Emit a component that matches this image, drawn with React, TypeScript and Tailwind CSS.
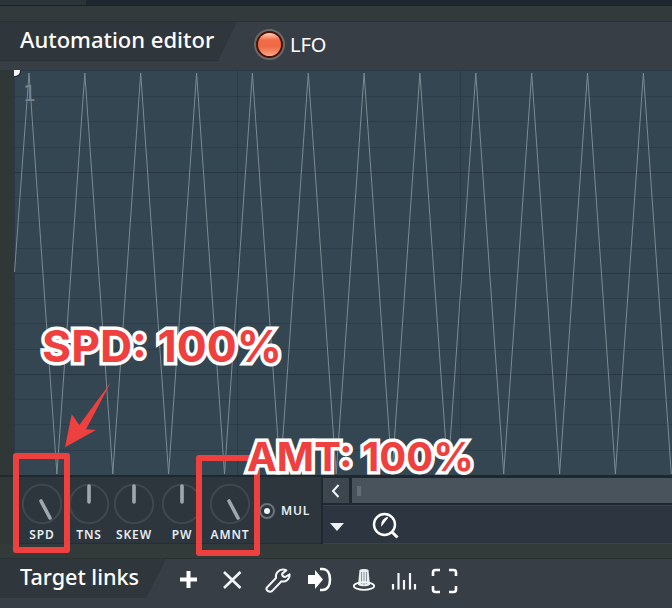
import React from "react";

const sans = "font-['Noto_Sans','Open_Sans',sans-serif]";

const wavePoints = (() => {
  const period = 55.85;
  const pts: string[] = ["0.5,202"];
  for (let i = 0; i < 12; i++) {
    const peak = 15 + i * period;
    pts.push(`${peak.toFixed(1)},3`);
    pts.push(`${(peak + period / 2).toFixed(1)},404`);
  }
  return pts.join(" ");
})();

const hLines = Array.from({ length: 15 }, (_, i) => ({ y: 26 + i * 25.25, dark: (i + 1) % 4 === 0 }));

function Graph() {
  return (
    <svg width="658" height="405" viewBox="0 0 658 405" className="block">
      {hLines.map((l) => (
        <line key={l.y} x1="0" x2="658" y1={Math.round(l.y) + 0.5} y2={Math.round(l.y) + 0.5} stroke={l.dark ? "#263540" : "#2c3d49"} strokeWidth="1" />
      ))}
      <line x1="223.5" x2="223.5" y1="0" y2="405" stroke="#2a3a46" />
      <line x1="446.5" x2="446.5" y1="0" y2="405" stroke="#2a3a46" />
      <line x1="0.5" x2="0.5" y1="0" y2="405" stroke="#2a3a46" />
      <line x1="0" x2="658" y1="0.5" y2="0.5" stroke="#2a3a46" />
      <polyline points={wavePoints} fill="none" stroke="#7a8b94" strokeWidth="1" />
    </svg>
  );
}

function Knob({ label, w, x2, y2, x1, y1 }: { label: string; w: string; x1: number; y1: number; x2: number; y2: number }) {
  return (
    <div className={`${w} shrink-0 flex flex-col items-center`}>
      <svg width="42" height="42" viewBox="0 0 42 42" className="shrink-0 block mt-[6px]">
        <circle cx="21" cy="21" r="19.2" fill="none" stroke="#3f484f" strokeWidth="2" />
        <line x1={x1} y1={y1} x2={x2} y2={y2} stroke="#a0a8ad" strokeWidth="3.6" strokeLinecap="round" />
      </svg>
      <span className={`${sans} mt-[2px] text-[12px] leading-[16px] font-semibold tracking-[0.9px] text-[#e6edf2] whitespace-nowrap`}>{label}</span>
    </div>
  );
}

function ToolIcons() {
  return (
    <div className="flex items-center h-[44px] ml-[4px]">
      <svg width="316" height="44" viewBox="0 0 316 44" className="block" fill="none">
        {/* plus */}
        <path d="M10 20.500h17M18.500 12v17" stroke="#fff" strokeWidth="4" />
        {/* cross */}
        <path d="M54 13l16.500 16M70.500 13L54 29" stroke="#f2f6f9" strokeWidth="2.600" />
        {/* wrench */}
        <path d="M96.500 29l9.500-10c-1-4.500 2.500-8.500 7-8.500 1.300 0 2.400.3 3.400.8l-4.200 3.300c-.4 1.800.9 3.500 3 3.400l4.400-2.700c.3 4.600-3.600 8-8.100 7l-9.500 9.800c-2.600 1.600-6.300-.7-5.500-3.100z" stroke="#f2f6f9" strokeWidth="2" strokeLinejoin="round" />
        {/* arrow into bracket */}
        <path d="M138 16h7V11l8 9.500-8 9.500v-5h-7z" fill="#fff" />
        <path d="M150 10h2.500c4.800 0 7.500 4.500 7.500 10.500S157.300 31 152.500 31H150" stroke="#fff" strokeWidth="2.600" />
        {/* knob */}
        <path d="M189.500 11c2-1.300 7-1.300 9 0l1.500 15c-2.500 1.700-9.500 1.700-12 0z" fill="#e8edf0" />
        <path d="M191.500 13v12M194 13v13M196.500 13v12" stroke="#7f8a92" strokeWidth="0.900" />
        <ellipse cx="194" cy="27" rx="10.200" ry="3.800" stroke="#f4f7f9" strokeWidth="1.800" />
        {/* bars */}
        <path d="M223 30.500V25M228.500 30.500V14M234 30.500V21M240 30.500V14M245 30.500V25" stroke="#f4f7f9" strokeWidth="2.200" />
        {/* fullscreen */}
        <path d="M263 17v-3.500c0-1.500 1-2.500 2.500-2.500h4.500M279 11h4.500c1.500 0 2.500 1 2.500 2.500V17M286 27v3.500c0 1.500-1 2.500-2.500 2.500H279M270 33h-4.500c-1.500 0-2.500-1-2.500-2.500V27" stroke="#fff" strokeWidth="2.600" />
      </svg>
    </div>
  );
}

export default function App() {
  return (
    <div className="relative w-[672px] h-[608px] overflow-hidden bg-[#323a3a] flex flex-col">
      {/* top window strip */}
      <div className="h-[6px] flex bg-[#1e272f] border-b border-[#1a2024] shrink-0">
        <div className="w-[86px] bg-[#2b3438]" />
      </div>
      <div className="h-[16px] shrink-0 bg-[#323a3b] border-b border-[#2a3132]" />

      {/* header */}
      <div className="relative h-[48px] shrink-0 bg-[#373e46] flex items-start">
        <div className="h-[39px] w-[237px] shrink-0 bg-[#30373c] border-b border-[#282e33] [clip-path:polygon(0_0,100%_0,92%_100%,0_100%)] flex items-center pl-[20px] pb-[5px]">
          <span className={`${sans} text-[22px] leading-[28px] font-medium text-white whitespace-nowrap`}>Automation editor</span>
        </div>
        <div className="ml-[17px] mt-[7px] w-[31px] h-[31px] shrink-0 rounded-full bg-[#6a6a68] p-[2px]">
          <div className="w-full h-full rounded-full bg-[#4a1208] p-[2px]">
            <div className="w-full h-full rounded-full bg-[linear-gradient(180deg,#ffd0b8_0%,#f26c48_30%,#ee6a45_60%,#ffa584_100%)]" />
          </div>
        </div>
        <span className={`${sans} ml-[5px] mt-[10px] text-[20px] leading-[26px] text-white`}>LFO</span>
      </div>

      {/* editor body */}
      <div className="flex shrink-0">
        <div className="w-[14px] shrink-0 bg-[#2f3737]" />
        <div className="relative w-[658px] h-[405px] bg-[#334651] overflow-hidden">
          <Graph />
          <div className="absolute left-0 top-0 w-[6px] h-[6px] bg-[#f4f6f7] rounded-br-[5px] shadow-[1px_1px_0_#20292f]" />
          <span className="absolute left-[9px] top-[11px] font-['DejaVu_Sans',sans-serif] text-[21px] leading-[26px] text-[#75868f]">1</span>
        </div>
      </div>
      <div className="h-[2px] shrink-0 bg-[#1f282f]" />

      {/* controls */}
      <div className="flex h-[67px] shrink-0">
        <div className="w-[14px] shrink-0 bg-[#2f3737]" />
        <div className="w-[307px] shrink-0 bg-[#2d353d] border-b border-[#262d33] flex">
          <Knob label="SPD" w="w-[56px]" x1={20} y1={18} x2={29} y2={35} />
          <Knob label="TNS" w="w-[38px]" x1={21} y1={3} x2={21} y2={19} />
          <Knob label="SKEW" w="w-[52px]" x1={21} y1={3} x2={21} y2={19} />
          <Knob label="PW" w="w-[44px]" x1={21} y1={3} x2={21} y2={19} />
          <Knob label="AMNT" w="w-[52px]" x1={20} y1={18} x2={29} y2={35} />
          <div className="flex items-center ml-[3px] h-[67px]">
            <div className="w-[16px] h-[16px] rounded-full border-2 border-[#69737b] flex items-center justify-center shrink-0">
              <div className="w-[6px] h-[6px] rounded-full bg-[#f0f4f7]" />
            </div>
            <span className={`${sans} ml-[6px] text-[12px] leading-[16px] font-semibold tracking-[0.8px] text-[#e6edf2]`}>MUL</span>
          </div>
        </div>
        <div className="w-[2px] shrink-0 bg-[#1f282f]" />
        <div className="flex-1 flex flex-col bg-[#1f282f] min-w-0">
          <div className="h-[26px] shrink-0 flex gap-[3px] pt-[1px]">
            <div className="w-[26px] h-[25px] shrink-0 bg-[#3d464e] flex items-center justify-center">
              <svg width="12" height="16" viewBox="0 0 12 16" fill="none" className="block">
                <path d="M8.500 2L3 8l5.500 6" stroke="#f2f5f7" strokeWidth="2" />
              </svg>
            </div>
            <div className="flex-1 h-[25px] bg-[#49535c] flex items-center pl-[5px]">
              <div className="w-[4px] h-[10px] bg-[#626d75]" />
            </div>
          </div>
          <div className="mt-[2px] flex-1 bg-[#2d3640] border-t border-[#3a434b] border-b border-b-[#3a424a] flex items-center">
            <svg width="14" height="8" viewBox="0 0 14 8" className="block ml-[7px] mt-[4px] shrink-0">
              <path d="M0 0h14L7 8z" fill="#eef1f3" />
            </svg>
            <svg width="28" height="28" viewBox="0 0 28 28" fill="none" className="block ml-[28px] mt-[2px] shrink-0">
              <circle cx="12.500" cy="12.500" r="10.500" stroke="#fff" strokeWidth="2.400" />
              <path d="M10 12.500c0-3 2-5.500 5.500-7L10 12.500z" fill="#fff" stroke="#fff" strokeWidth="1.500" />
              <path d="M20.500 20.500l5 5" stroke="#fff" strokeWidth="3" />
            </svg>
          </div>
        </div>
      </div>

      <div className="h-[15px] shrink-0 bg-[#323a3a] border-b border-[#2a3132]" />

      {/* target links */}
      <div className="flex-1 bg-[#373e46] flex items-start min-h-0">
        <div className="h-[39px] w-[166px] shrink-0 bg-[#30373c] [clip-path:polygon(0_0,100%_0,88%_100%,0_100%)] flex items-center pl-[20px] pb-[4px]">
          <span className={`${sans} text-[21.600px] leading-[28px] font-medium text-white whitespace-nowrap`}>Target links</span>
        </div>
        <ToolIcons />
      </div>

      {/* annotations */}
      <div className="absolute left-[13px] top-[453px] w-[57px] h-[100px] border-[6px] border-[#ef4040] rounded-[3px]" />
      <div className="absolute left-[196px] top-[455px] w-[64px] h-[101px] border-[6px] border-[#ef4040] rounded-[3px]" />
      <svg width="60" height="80" viewBox="0 0 60 80" className="absolute left-[60px] top-[375px]">
        <path d="M51 7L19.300 50L11.700 39L5 72.300L36 55L26 54.300z" fill="#ef4040" />
      </svg>
      <span className="absolute left-[42px] top-[321px] font-['Inter',sans-serif] font-bold text-[44.500px] leading-[50px] text-[#ef4040] whitespace-nowrap [-webkit-text-stroke:7px_#fff] [paint-order:stroke_fill]">SPD: 100%</span>
      <span className="absolute left-[247px] top-[433px] font-['Inter',sans-serif] font-bold text-[40px] leading-[48px] text-[#ef4040] whitespace-nowrap [-webkit-text-stroke:7px_#fff] [paint-order:stroke_fill]">AMT: 100%</span>
    </div>
  );
}
